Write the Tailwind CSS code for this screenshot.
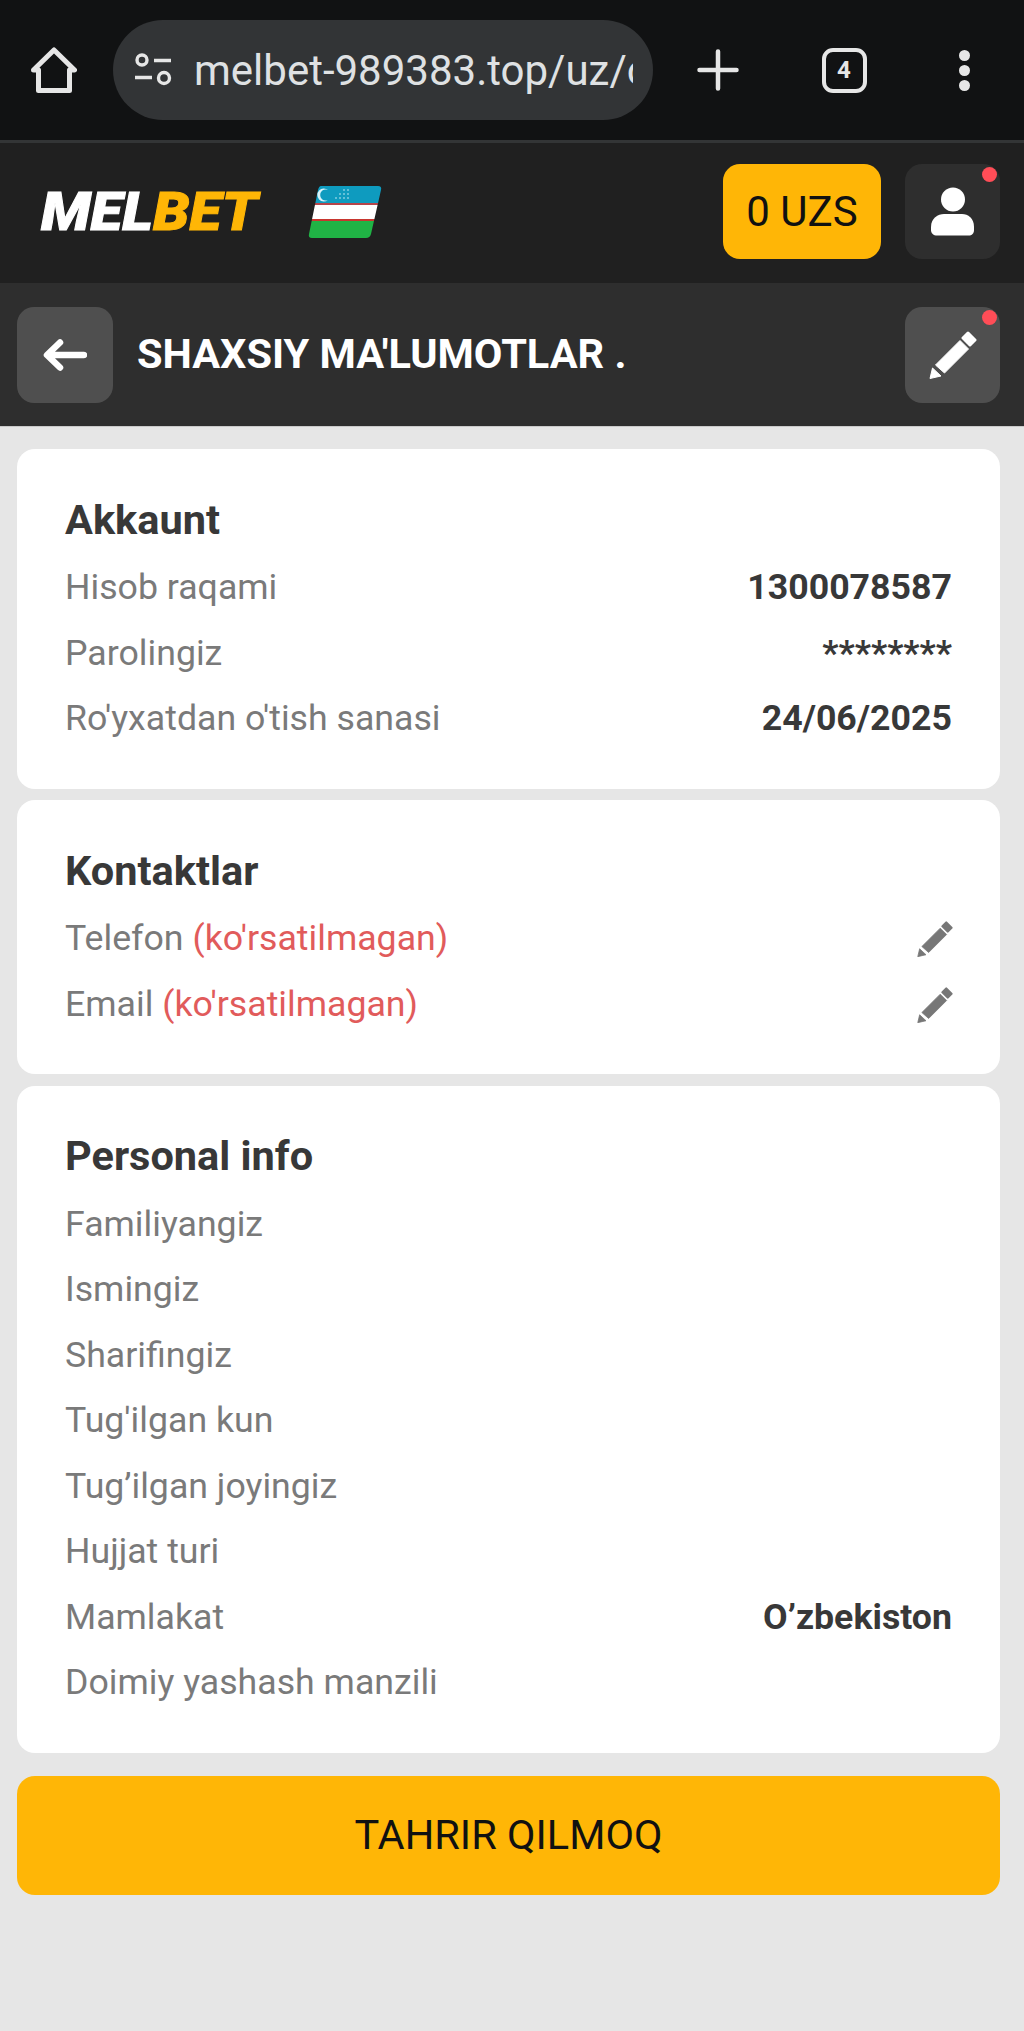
<!DOCTYPE html>
<html lang="en">
  <head>
    <meta charset="UTF-8" />
    <meta name="viewport" content="width=device-width, initial-scale=1.0" />
    <title>Shaxsiy ma'lumotlar</title>
    <script src="https://cdn.jsdelivr.net/npm/@tailwindcss/browser@4"></script>
  </head>
  <body class="bg-[#e6e6e6] font-['Roboto',sans-serif] h-[2031px] overflow-hidden">
    <!-- browser bar -->
    <div class="h-[140px] bg-[#111213] flex items-center">
      <div class="w-[113px] flex justify-center pr-[5px]">
        <svg class="w-[46px] h-[46px]" viewBox="0 0 46 46" fill="none" stroke="#e6e6e6" stroke-width="5" stroke-linejoin="round" stroke-linecap="round">
          <path d="M2.5 23 L23 3 L43.5 23 H38.5 V43.5 H7.5 V23 Z" />
        </svg>
      </div>
      <div class="w-[540px] h-[100px] rounded-full bg-[#323436] flex items-center pl-[21px] pr-[20px] overflow-hidden">
        <svg class="w-[38px] h-[34px] shrink-0" viewBox="0 0 38 34" fill="none" stroke="#e6e6e6" stroke-width="3.4">
          <circle cx="8" cy="7" r="5" />
          <path d="M20 7.5 H37" />
          <path d="M1 24.5 H18" />
          <circle cx="30" cy="25" r="5.5" />
        </svg>
        <div class="ml-[22px] pt-[2px] text-[42px] leading-[1.2] text-[#dfe1e3] whitespace-nowrap overflow-hidden">melbet-989383.top/uz/office</div>
      </div>
      <div class="w-[130px] flex justify-center">
        <svg class="w-[42px] h-[42px]" viewBox="0 0 42 42" stroke="#e6e6e6" stroke-width="4.5" stroke-linecap="round">
          <path d="M21 2.5 V39.5 M2.5 21 H39.5" />
        </svg>
      </div>
      <div class="w-[60px] ml-[31px] flex justify-center">
        <div class="w-[45px] h-[45px] border-[4px] border-[#e6e6e6] rounded-[11px] flex items-center justify-center text-[24px] font-bold text-[#e6e6e6] leading-none">4</div>
      </div>
      <div class="flex-1 flex flex-col items-center gap-[4px] pl-[30px]">
        <div class="w-[11px] h-[11px] rounded-full bg-[#e6e6e6]"></div>
        <div class="w-[11px] h-[11px] rounded-full bg-[#e6e6e6]"></div>
        <div class="w-[11px] h-[11px] rounded-full bg-[#e6e6e6]"></div>
      </div>
    </div>

    <!-- site header -->
    <div class="h-[143px] bg-[#202020] border-t-[3px] border-[#333536] flex items-center pl-[41px] pr-[24px] pb-[3px]">
      <div class="w-[220px] text-[54px] leading-none font-black italic origin-left scale-x-[1.08] [-webkit-text-stroke:1px] whitespace-nowrap"><span class="text-white">MEL</span><span class="text-[#ffb606]">BET</span></div>
      <svg class="w-[74px] h-[52px] ml-[47px]" viewBox="0 0 74 52">
        <defs>
          <clipPath id="flag"><path d="M13 0 H70 Q74 0 73 4 L63 48 Q62 52 58 52 H4 Q0 52 1 48 L10 4 Q11 0 13 0 Z" /></clipPath>
        </defs>
        <g clip-path="url(#flag)">
          <rect width="74" height="17" fill="#0e9bbf" />
          <rect y="17" width="74" height="2" fill="#b5454a" />
          <rect y="19" width="74" height="14" fill="#ffffff" />
          <rect y="33" width="74" height="2" fill="#c8362f" />
          <rect y="35" width="74" height="17" fill="#20b345" />
        </g>
        <path d="M20 4 A5.5 5.5 0 1 0 20 14 A6.5 6.5 0 1 1 20 4 Z" fill="#d8f3fa" />
        <g fill="#cfeef7">
          <circle cx="28" cy="12" r="0.8" /><circle cx="32" cy="12" r="0.8" /><circle cx="36" cy="12" r="0.8" /><circle cx="40" cy="12" r="0.8" />
          <circle cx="32" cy="8" r="0.8" /><circle cx="36" cy="8" r="0.8" /><circle cx="40" cy="8" r="0.8" />
          <circle cx="36" cy="4" r="0.8" /><circle cx="40" cy="4" r="0.8" />
        </g>
      </svg>
      <div class="ml-auto w-[158px] h-[95px] rounded-[17px] bg-[#ffb606] flex items-center justify-center text-[42px] text-[#111] leading-none">0 UZS</div>
      <div class="relative ml-[24px] w-[95px] h-[95px] rounded-[17px] bg-[#2e2e2e] flex items-center justify-center">
        <svg class="w-[44px] h-[49px]" viewBox="0 0 44 49" fill="#fff">
          <circle cx="22" cy="12.5" r="12" />
          <path d="M0 40 C0 31 7 27 13 27 H31 C37 27 43 31 43 40 V43 C43 46.5 41 48.5 37.5 48.5 H6 C2.5 48.5 0 46.5 0 43 Z" />
        </svg>
        <div class="absolute right-[3px] top-[3px] w-[15px] h-[15px] rounded-full bg-[#ff4d57]"></div>
      </div>
    </div>

    <!-- page title -->
    <div class="h-[144px] bg-[#2e2e2e] border-b border-[#c9c9c9] flex items-center pl-[17px] pr-[24px]">
      <div class="w-[96px] h-[96px] rounded-[17px] bg-[#4f4f4f] flex items-center justify-center">
        <svg class="w-[44px] h-[32px]" viewBox="0 0 44 32" fill="none" stroke="#fff" stroke-width="6.5" stroke-linecap="round" stroke-linejoin="round">
          <path d="M41 16 H5 M17 3.5 L4 16 L17 28.5" />
        </svg>
      </div>
      <h1 class="ml-[24px] -mt-[2px] text-[41.5px] font-bold text-white leading-none">SHAXSIY MA'LUMOTLAR .</h1>
      <div class="relative ml-auto w-[95px] h-[96px] rounded-[17px] bg-[#4f4f4f] flex items-center justify-center">
        <svg class="w-[48px] h-[48px]" viewBox="0 0 48 48" fill="#fff" stroke="#fff" stroke-linejoin="round">
          <path stroke-width="1" d="M1 47.5 L3.5 37 L12 45 Z" />
          <path stroke-width="1" d="M6.5 34 L31 9.5 L39.5 18 L15.5 42 Z" />
          <path stroke-width="3" d="M34 7 L39 2 L46 9 L41 14 Z" />
        </svg>
        <div class="absolute right-[3px] top-[3px] w-[15px] h-[15px] rounded-full bg-[#ff4d57]"></div>
      </div>
    </div>

    <!-- content -->
    <main class="px-[17px] pr-[24px] pt-[22px] flex flex-col gap-[11.5px]">
      <section class="bg-white rounded-[18px] px-[48px] pt-[38px] pb-[37px]">
        <h2 class="h-[64px] mb-[4px] pt-[2px] flex items-center text-[41.5px] font-bold text-[#383838]">Akkaunt</h2>
        <div class="h-[65.5px] pt-[1px] flex items-center justify-between text-[35.7px]"><span class="text-[#7a7a7a]">Hisob raqami</span><span class="font-bold text-[#383838]">1300078587</span></div>
        <div class="h-[65.5px] pt-[1px] flex items-center justify-between text-[35.7px]"><span class="text-[#7a7a7a]">Parolingiz</span><span class="font-bold text-[#383838]">********</span></div>
        <div class="h-[65.5px] pt-[1px] flex items-center justify-between text-[35.7px]"><span class="text-[#7a7a7a]">Ro'yxatdan o'tish sanasi</span><span class="font-bold text-[#383838]">24/06/2025</span></div>
      </section>

      <section class="bg-white rounded-[18px] px-[48px] pt-[38px] pb-[37px]">
        <h2 class="h-[64px] mb-[4px] pt-[2px] flex items-center text-[41.5px] font-bold text-[#383838]">Kontaktlar</h2>
        <div class="h-[65.5px] pt-[1px] flex items-center justify-between text-[35.7px]">
          <span class="text-[#7a7a7a]">Telefon <span class="text-[#e15b5b]">(ko'rsatilmagan)</span></span>
          <svg class="w-[36px] h-[36px] -mr-[1px]" viewBox="0 0 48 48" fill="#777" stroke="#777" stroke-linejoin="round">
            <path stroke-width="1" d="M1 47.5 L3.5 37 L12 45 Z" />
            <path stroke-width="1" d="M6.5 34 L31 9.5 L39.5 18 L15.5 42 Z" />
            <path stroke-width="3" d="M34 7 L39 2 L46 9 L41 14 Z" />
          </svg>
        </div>
        <div class="h-[65.5px] pt-[1px] flex items-center justify-between text-[35.7px]">
          <span class="text-[#7a7a7a]">Email <span class="text-[#e15b5b]">(ko'rsatilmagan)</span></span>
          <svg class="w-[36px] h-[36px] -mr-[1px]" viewBox="0 0 48 48" fill="#777" stroke="#777" stroke-linejoin="round">
            <path stroke-width="1" d="M1 47.5 L3.5 37 L12 45 Z" />
            <path stroke-width="1" d="M6.5 34 L31 9.5 L39.5 18 L15.5 42 Z" />
            <path stroke-width="3" d="M34 7 L39 2 L46 9 L41 14 Z" />
          </svg>
        </div>
      </section>

      <section class="bg-white rounded-[18px] px-[48px] pt-[38px] pb-[37px]">
        <h2 class="h-[64px] mb-[4px] pt-[2px] flex items-center text-[41.5px] font-bold text-[#383838]">Personal info</h2>
        <div class="h-[65.5px] pt-[1px] flex items-center text-[35.7px] text-[#7a7a7a]">Familiyangiz</div>
        <div class="h-[65.5px] pt-[1px] flex items-center text-[35.7px] text-[#7a7a7a]">Ismingiz</div>
        <div class="h-[65.5px] pt-[1px] flex items-center text-[35.7px] text-[#7a7a7a]">Sharifingiz</div>
        <div class="h-[65.5px] pt-[1px] flex items-center text-[35.7px] text-[#7a7a7a]">Tug'ilgan kun</div>
        <div class="h-[65.5px] pt-[1px] flex items-center text-[35.7px] text-[#7a7a7a]">Tug’ilgan joyingiz</div>
        <div class="h-[65.5px] pt-[1px] flex items-center text-[35.7px] text-[#7a7a7a]">Hujjat turi</div>
        <div class="h-[65.5px] pt-[1px] flex items-center justify-between text-[35.7px]"><span class="text-[#7a7a7a]">Mamlakat</span><span class="font-bold text-[#383838]">O’zbekiston</span></div>
        <div class="h-[65.5px] pt-[1px] flex items-center text-[35.7px] text-[#7a7a7a]">Doimiy yashash manzili</div>
      </section>

      <button class="mt-[12px] h-[119px] rounded-[18px] bg-[#ffb606] text-[41.5px] text-[#111]">TAHRIR QILMOQ</button>
    </main>
  </body>
</html>
